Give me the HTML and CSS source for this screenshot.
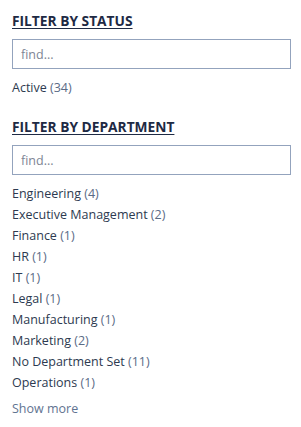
FILE: index.html
```html
<!DOCTYPE html>
<html>
<head>
<meta charset="utf-8">
<link rel="stylesheet" href="styles.css">
</head>
<body>
<div class="panel">
  <section class="filter">
    <h2 class="filter-title">FILTER BY STATUS</h2>
    <input class="filter-find" type="text" placeholder="find...">
    <ul class="filter-list">
      <li>Active <span class="count">(34)</span></li>
    </ul>
  </section>
  <section class="filter">
    <h2 class="filter-title">FILTER BY DEPARTMENT</h2>
    <input class="filter-find" type="text" placeholder="find...">
    <ul class="filter-list">
      <li>Engineering <span class="count">(4)</span></li>
      <li>Executive Management <span class="count">(2)</span></li>
      <li>Finance <span class="count">(1)</span></li>
      <li>HR <span class="count">(1)</span></li>
      <li>IT <span class="count">(1)</span></li>
      <li>Legal <span class="count">(1)</span></li>
      <li>Manufacturing <span class="count">(1)</span></li>
      <li>Marketing <span class="count">(2)</span></li>
      <li>No Department Set <span class="count">(11)</span></li>
      <li>Operations <span class="count">(1)</span></li>
    </ul>
    <a class="show-more">Show more</a>
  </section>
</div>
</body>
</html>
```
FILE: styles.css
```css
html, body {
  margin: 0;
  padding: 0;
  background: #ffffff;
}
body {
  font-family: "Open Sans", "Noto Sans", sans-serif;
  font-size: 12.5px;
  color: #2d3a50;
}
.panel {
  display: flex;
  flex-direction: column;
  gap: 20px;
  padding: 12px 10px 0 12px;
}
.filter {
  display: flex;
  flex-direction: column;
}
.filter-title {
  margin: 0;
  font-size: 13.75px;
  line-height: 18px;
  font-weight: 700;
  color: #1e2a44;
  text-decoration: underline;
  text-underline-offset: 2px;
}
.filter-find {
  margin-top: 9px;
  box-sizing: border-box;
  width: 279px;
  height: 30px;
  border: 1px solid #93a3bd;
  border-radius: 0;
  padding: 0 8px;
  font-family: inherit;
  font-size: 12.5px;
  color: #2d3a50;
  outline: none;
}
.filter-find::placeholder {
  color: #7d8594;
}
.filter-list {
  list-style: none;
  margin: 8px 0 0 0;
  padding: 0;
}
.filter-list li {
  line-height: 21px;
  height: 21px;
}
.count {
  color: #5b6b86;
}
.show-more {
  margin-top: 5px;
  line-height: 21px;
  color: #5f7391;
  cursor: pointer;
}
```
